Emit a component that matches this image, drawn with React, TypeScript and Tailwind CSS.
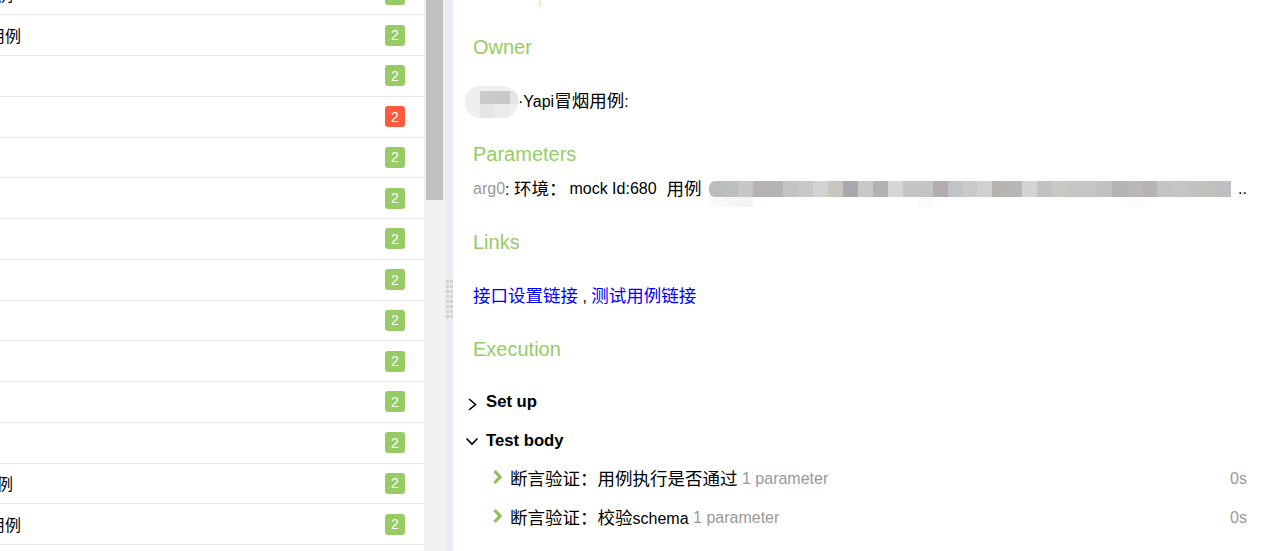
import React from "react"

// rows of the left tree, scrolled so the first one is cut at the top
const rows = [
  { text: "冒烟用例", clip: 13, status: "passed" },
  { text: "冒烟用例", clip: 21, status: "passed" },
  { text: "", clip: 0, status: "passed" },
  { text: "", clip: 0, status: "failed" },
  { text: "", clip: 0, status: "passed" },
  { text: "", clip: 0, status: "passed" },
  { text: "", clip: 0, status: "passed" },
  { text: "", clip: 0, status: "passed" },
  { text: "", clip: 0, status: "passed" },
  { text: "", clip: 0, status: "passed" },
  { text: "", clip: 0, status: "passed" },
  { text: "", clip: 0, status: "passed" },
  { text: "冒烟用例", clip: 13, status: "passed" },
  { text: "冒烟用例", clip: 21, status: "passed" },
  { text: "", clip: 0, status: "passed" },
]

// pixelated blur over the parameter value
const mosaicTop = [
  "#bcbebd", "#bdbfbe", "#c6c6c6", "#b7b1b1", "#b4b4b4", "#c3c3c3", "#c7c7c7",
  "#d3d3d3", "#c9c4bc", "#a9a8b0", "#c8c8c8", "#b2b2b2", "#d6d6d6", "#c4c4c4",
  "#c4c4c4", "#b5adad", "#c1c4c7", "#c9c9c9", "#cfd0cf", "#b6b3b1", "#b5b7b9",
  "#d4d4d2", "#c2c2c2", "#c6c8c5", "#c5c6c4", "#c5c5c5", "#c1c1c1", "#b5b4b4",
  "#b8b8ba", "#b7b3b3", "#c1c4c5", "#c5c5c5", "#c2c2c3", "#c2c0bd", "#bfbfc3",
]
const mosaicBottom = [
  "#f8f9fb", "#f6f6f5", "#f4f4f4", "#ffffff", "#ffffff", "#ffffff", "#ffffff",
  "#ffffff", "#ffffff", "#ffffff", "#ffffff", "#ffffff", "#ffffff", "#ffffff",
  "#fafafa", "#ffffff", "#ffffff", "#ffffff", "#ffffff", "#ffffff", "#ffffff",
  "#ffffff", "#ffffff", "#ffffff", "#ffffff", "#ffffff", "#ffffff", "#ffffff",
  "#fbfbfb", "#ffffff", "#ffffff", "#ffffff", "#ffffff", "#ffffff", "#ffffff",
]

const steps = [
  { name: "断言验证：用例执行是否通过", latin: "", params: "1 parameter", time: "0s" },
  { name: "断言验证：校验", latin: "schema", params: "1 parameter", time: "0s" },
]

// chinese glyphs in the report run a bit wider than the latin text
function Cjk({ children }: { children: React.ReactNode }) {
  return <span className="text-[17.5px]">{children}</span>
}

function Heading({ children }: { children: React.ReactNode }) {
  return <div className="text-[20px] leading-[24px] text-[#97cc64]">{children}</div>
}

function AngleRight() {
  return (
    <svg width="14" height="24" viewBox="0 0 14 24" fill="none" stroke="#000" strokeWidth="1.6">
      <polyline points="4,9 10.5,14.5 4,20" />
    </svg>
  )
}

function AngleDown() {
  return (
    <svg width="14" height="24" viewBox="0 0 14 24" fill="none" stroke="#000" strokeWidth="1.6">
      <polyline points="1.5,9.5 7,15 12.5,9.5" />
    </svg>
  )
}

function StepAngle() {
  return (
    <svg width="12" height="24" viewBox="0 0 12 24" fill="none" stroke="#8cc257" strokeWidth="3.2">
      <polyline points="2.5,4 8,10 2.5,16" />
    </svg>
  )
}

export default function App() {
  return (
    <div className="flex w-[1267px] h-[551px] overflow-hidden bg-white font-['Liberation_Sans','Noto_Sans_CJK_SC',sans-serif] text-black">
      {/* tree list */}
      <div className="w-[424px] shrink-0 overflow-hidden">
        <div className="-mt-[25.4px]">
          {rows.map((row, i) => (
            <div
              key={i}
              className="flex items-center h-[40.75px] border-b border-[#e9e9e9] pr-[19px]"
            >
              {row.text ? (
                <div
                  className="flex justify-end overflow-hidden whitespace-nowrap text-[16px] leading-[24px] font-['Noto_Sans_CJK_SC',sans-serif]"
                  style={{ width: row.clip }}
                >
                  <span className="shrink-0">{row.text}</span>
                </div>
              ) : null}
              <div
                className={
                  row.status === "failed"
                    ? "ml-auto flex items-center justify-center w-[20px] h-[21px] rounded-[3px] bg-[#fd5a3e] text-white text-[14px] leading-none"
                    : "ml-auto flex items-center justify-center w-[20px] h-[21px] rounded-[3px] bg-[#97cc64] text-white text-[14px] leading-none"
                }
              >
                2
              </div>
            </div>
          ))}
        </div>
      </div>

      {/* scrollbar */}
      <div className="w-[21px] shrink-0 bg-[#f1f1f1] px-[2px]">
        <div className="h-[200px] bg-[#c1c1c1]" />
      </div>

      {/* splitter */}
      <div className="w-[8px] shrink-0 bg-[#e9edf1] pt-[280px] pl-[1px]">
        <div className="grid grid-cols-2 gap-x-[1px] gap-y-[2px] w-[7px]">
          {Array.from({ length: 16 }).map((_, i) => (
            <div key={i} className="w-[3px] h-[3px] bg-[#d2d2d2]" />
          ))}
        </div>
      </div>

      {/* test result pane */}
      <div className="flex-1 px-[20px] text-[16px] leading-[24px]">
        <div className="ml-[66px] w-[2px] h-[7px] bg-[#fde3c2]" />

        <div className="mt-[28px]">
          <Heading>Owner</Heading>
        </div>
        <div className="mt-[30.5px] flex items-center h-[24px] -ml-[8px]">
          <div className="w-[53px] h-[32px] shrink-0 rounded-[15px] bg-[#efefef] overflow-hidden flex flex-col">
            <div className="flex h-[18px] pt-[5px]">
              <div className="w-[15px]" />
              <div className="w-[15px] bg-[#cbcbcb]" />
              <div className="w-[15px] bg-[#c8c8c8]" />
              <div className="w-[8px] bg-[#e4e4e4]" />
            </div>
            <div className="flex flex-1">
              <div className="w-[15px]" />
              <div className="w-[15px] bg-[#e6e6e6]" />
              <div className="w-[15px] bg-[#ececec]" />
            </div>
          </div>
          <span className="whitespace-nowrap">
            ·Yapi<Cjk>冒烟用例</Cjk>:
          </span>
        </div>

        <div className="mt-[28.5px]">
          <Heading>Parameters</Heading>
        </div>
        <div className="mt-[10.5px] flex items-start h-[24px] whitespace-nowrap">
          <span className="text-[#999]">arg0</span>
          <span>
            : <Cjk>环境：</Cjk>
          </span>
          <span className="ml-[3px]">mock Id:680</span>
          <span className="ml-[10px]">
            <Cjk>用例</Cjk>
          </span>
          <div className="ml-[7px] mt-[4.5px] w-[523px] shrink-0 flex flex-col">
            <div className="flex h-[16px]">
              {mosaicTop.map((c, i) => (
                <div
                  key={i}
                  className={i === 0 ? "w-[15px] rounded-l-[6px]" : "w-[15px]"}
                  style={{ backgroundColor: c }}
                />
              ))}
            </div>
            <div className="flex h-[10px]">
              {mosaicBottom.map((c, i) => (
                <div key={i} className="w-[15px]" style={{ backgroundColor: c }} />
              ))}
            </div>
          </div>
          <span className="ml-auto">..</span>
        </div>

        <div className="mt-[29.5px]">
          <Heading>Links</Heading>
        </div>
        <div className="mt-[30px] whitespace-nowrap">
          <a className="text-[#0000ff]">
            <Cjk>接口设置链接</Cjk>
          </a>
          <span> , </span>
          <a className="text-[#0000ff]">
            <Cjk>测试用例链接</Cjk>
          </a>
        </div>

        <div className="mt-[28px]">
          <Heading>Execution</Heading>
        </div>
        <div className="mt-[29px] -ml-[8px]">
          <div className="flex items-start h-[24px] font-bold text-[16.7px]">
            <AngleRight />
            <span className="ml-[7px]">Set up</span>
          </div>
          <div className="mt-[15px] flex items-start h-[24px] font-bold text-[16.7px]">
            <AngleDown />
            <span className="ml-[7px]">Test body</span>
          </div>
          <div className="mt-[13.5px] flex flex-col gap-[15px] pl-[27px]">
            {steps.map((step) => (
              <div key={step.name + step.latin} className="flex items-start h-[24px] whitespace-nowrap">
                <StepAngle />
                <span className="ml-[6px]">
                  <Cjk>{step.name}</Cjk>
                  {step.latin}
                </span>
                <span className="ml-[4.5px] text-[#999]">{step.params}</span>
                <span className="ml-auto text-[#999]">{step.time}</span>
              </div>
            ))}
          </div>
        </div>
      </div>
    </div>
  )
}
